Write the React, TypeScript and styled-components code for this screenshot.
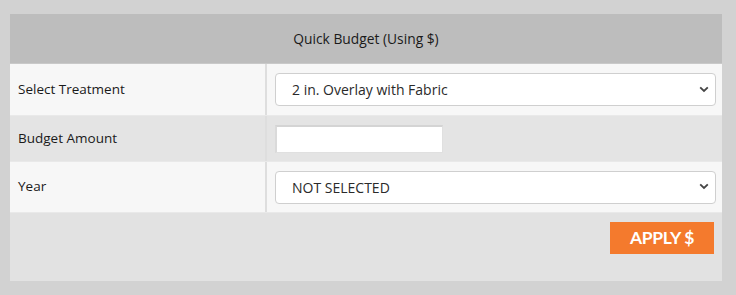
import React from 'react';
import styled, { createGlobalStyle } from 'styled-components';

const GlobalStyle = createGlobalStyle`
  html, body {
    margin: 0;
    padding: 0;
    background: #d2d2d2;
  }
  body {
    font-family: 'Open Sans', 'Liberation Sans', sans-serif;
    font-size: 13px;
    color: #222;
  }
`;

const Page = styled.div`
  padding: 14px 14px 14px 10px;
`;

const Panel = styled.div`
  width: 712px;
  background: #e2e2e2;
`;

const Header = styled.div`
  height: 49px;
  display: flex;
  align-items: center;
  justify-content: center;
  background: #bdbdbd;
  border-bottom: 1px solid #c9c9c9;
  font-size: 13.8px;
  color: #1a1a1a;
`;

const Row = styled.div<{ $shade: boolean; $height: number }>`
  display: grid;
  grid-template-columns: 257px 1fr;
  height: ${({ $height }) => $height}px;
  background: ${({ $shade }) => ($shade ? '#e4e4e4' : '#f7f7f7')};
  border-bottom: 1px solid #e9e9e9;
`;

const Label = styled.div`
  display: flex;
  align-items: center;
  padding-left: 8px;
  padding-bottom: 2px;
  border-right: 2px solid #dedede;
  font-size: 13.5px;
  color: #1a1a1a;
`;

const Field = styled.div`
  display: flex;
  align-items: center;
  padding: 0 6px 0 8px;
`;

const SelectBox = styled.div`
  position: relative;
  flex: 1;
  height: 31px;
  display: flex;
  align-items: center;
  padding-left: 16px;
  background: #fff;
  border: 1px solid #cfcfcf;
  border-radius: 4px;
  font-size: 14px;
  color: #2a2a2a;
`;

const Chevron = styled.svg`
  position: absolute;
  right: 6px;
  top: 50%;
  margin-top: -4px;
`;

const TextInput = styled.input`
  box-sizing: border-box;
  width: 168px;
  height: 28px;
  margin: 0;
  background: #fff;
  border: 1px solid #e0e0e0;
  border-top: 2px solid #d4d4d4;
  border-left: 2px solid #dadada;
  outline: none;
`;

const Footer = styled.div`
  height: 68px;
  display: flex;
  justify-content: flex-end;
  align-items: flex-start;
  padding: 9px 8px 0 0;
  box-sizing: border-box;
`;

const ApplyButton = styled.button`
  width: 104px;
  height: 32px;
  border: none;
  background: #f47a2d;
  color: #fff;
  font-family: Lato, 'Open Sans', sans-serif;
  font-weight: 700;
  font-size: 17.5px;
  letter-spacing: -0.3px;
  padding: 0 0 2px;
  cursor: pointer;
`;

const DownArrow = () => (
  <Chevron width="10" height="7" viewBox="0 0 10 7">
    <path d="M1.2 1.3 L5 5 L8.8 1.3" fill="none" stroke="#444" strokeWidth="1.8" />
  </Chevron>
);

export default function App() {
  return (
    <>
      <GlobalStyle />
      <Page>
        <Panel>
          <Header>Quick Budget (Using $)</Header>
          <Row $shade={false} $height={51}>
            <Label>Select Treatment</Label>
            <Field>
              <SelectBox>
                2 in. Overlay with Fabric
                <DownArrow />
              </SelectBox>
            </Field>
          </Row>
          <Row $shade $height={45}>
            <Label>Budget Amount</Label>
            <Field>
              <TextInput type="text" />
            </Field>
          </Row>
          <Row $shade={false} $height={50}>
            <Label>Year</Label>
            <Field>
              <SelectBox>
                NOT SELECTED
                <DownArrow />
              </SelectBox>
            </Field>
          </Row>
          <Footer>
            <ApplyButton>APPLY $</ApplyButton>
          </Footer>
        </Panel>
      </Page>
    </>
  );
}
